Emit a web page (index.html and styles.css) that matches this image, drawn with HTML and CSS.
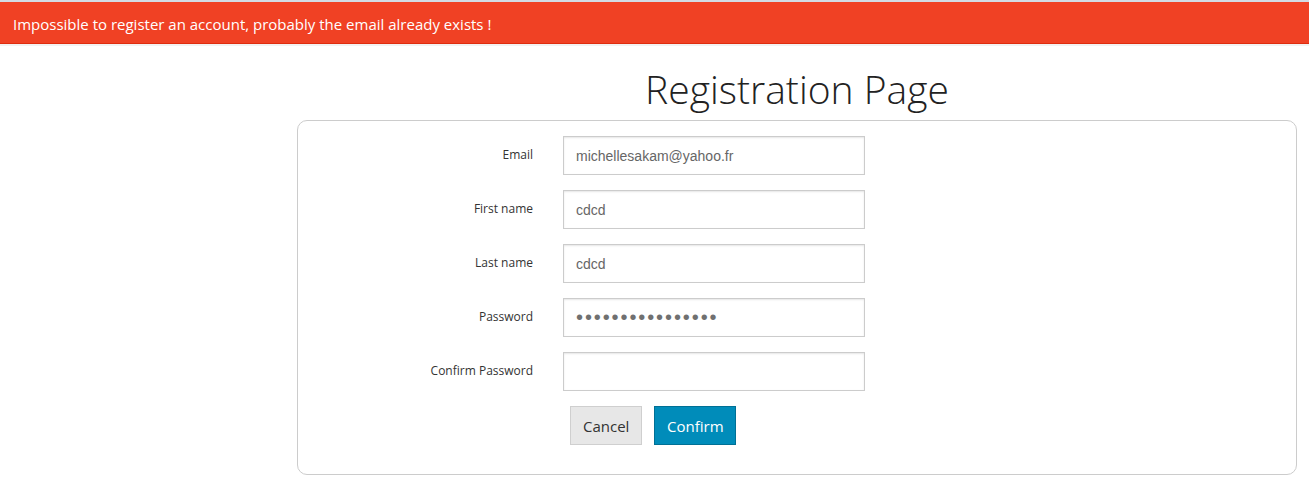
FILE: index.html
```html
<!DOCTYPE html>
<html lang="en">
<head>
<meta charset="utf-8">
<title>Registration Page</title>
<link rel="stylesheet" href="styles.css">
</head>
<body>
<div class="topline"></div>
<div class="alert-box">Impossible to register an account, probably the email already exists !</div>
<div class="underline"></div>
<main class="page">
  <h1 class="title">Registration Page</h1>
  <form class="panel">
    <div class="row">
      <label class="label" for="email">Email</label>
      <input class="field" id="email" type="text" value="michellesakam@yahoo.fr">
    </div>
    <div class="row">
      <label class="label" for="first">First name</label>
      <input class="field" id="first" type="text" value="cdcd">
    </div>
    <div class="row">
      <label class="label" for="last">Last name</label>
      <input class="field" id="last" type="text" value="cdcd">
    </div>
    <div class="row">
      <label class="label" for="pwd">Password</label>
      <input class="field pwd" id="pwd" type="password" value="abcdefghijklmnop">
    </div>
    <div class="row">
      <label class="label" for="cpwd">Confirm Password</label>
      <input class="field" id="cpwd" type="password" value="">
    </div>
    <div class="actions">
      <button type="button" class="btn btn-cancel">Cancel</button>
      <button type="button" class="btn btn-confirm">Confirm</button>
    </div>
  </form>
</main>
</body>
</html>
```

FILE: styles.css
```css
html, body {
  margin: 0;
  padding: 0;
  background: #ffffff;
  font-family: "Open Sans", "Liberation Sans", sans-serif;
  color: #222222;
}

.topline {
  height: 2px;
  background: #d3dbe3;
}

.alert-box {
  background: #f04124;
  border-bottom: 1px solid #de2d0f;
  color: #ffffff;
  font-size: 15px;
  line-height: 20px;
  height: 42px;
  box-sizing: border-box;
  padding: 12px 13px 10px;
}

.underline {
  height: 2px;
  background: #f2f2f2;
}

.page {
  margin-left: 297px;
  width: 1000px;
  padding-top: 15px;
}

.title {
  margin: 0 0 3px 0;
  text-align: center;
  font-weight: 300;
  font-size: 39px;
  line-height: 56px;
  color: #222222;
}

.panel {
  margin: 0;
  border: 1px solid #cccccc;
  border-radius: 10px;
  padding: 15px 0 29px 0;
  display: flex;
  flex-direction: column;
  gap: 15px;
}

.row {
  display: flex;
  align-items: center;
}

.label {
  width: 235px;
  text-align: right;
  font-size: 12px;
  color: #333333;
  margin-right: 30px;
  margin-top: -3px;
}

.field {
  width: 302px;
  height: 39px;
  box-sizing: border-box;
  border: 1px solid #cccccc;
  box-shadow: inset 0 1px 2px rgba(0, 0, 0, 0.1);
  padding: 0 12px;
  font-family: "Liberation Sans", Arial, sans-serif;
  font-size: 14px;
  color: #666666;
  background: #ffffff;
  margin: 0;
  outline: none;
}

.pwd {
  color: #707070;
  font-size: 20px;
  letter-spacing: 1.9px;
}

.actions {
  display: flex;
  gap: 12px;
  margin-left: 272px;
}

.btn {
  height: 39px;
  box-sizing: border-box;
  font-family: "Open Sans", "Liberation Sans", sans-serif;
  font-size: 15px;
  padding: 0 12px;
  margin: 0;
  cursor: pointer;
}

.btn-cancel {
  background: #e7e7e7;
  border: 1px solid #cfcfcf;
  color: #333333;
  width: 72px;
}

.btn-confirm {
  background: #008cba;
  border: 1px solid #007095;
  color: #ffffff;
  width: 82px;
}
```
